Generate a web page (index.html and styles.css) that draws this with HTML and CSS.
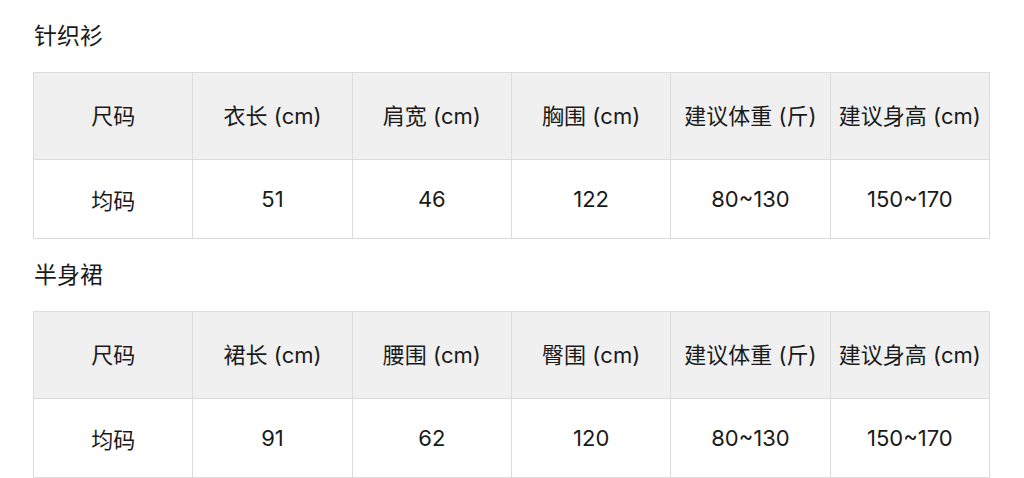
FILE: index.html
```html
<!DOCTYPE html>
<html lang="zh-CN">
<head>
<meta charset="utf-8">
<title>尺码表</title>
<link rel="stylesheet" href="styles.css">
</head>
<body>
<section class="block">
  <h2 class="title">针织衫</h2>
  <table class="size-table">
    <thead>
      <tr><th>尺码</th><th>衣长 (cm)</th><th>肩宽 (cm)</th><th>胸围 (cm)</th><th>建议体重 (斤)</th><th>建议身高 (cm)</th></tr>
    </thead>
    <tbody>
      <tr><td>均码</td><td>51</td><td>46</td><td>122</td><td>80~130</td><td>150~170</td></tr>
    </tbody>
  </table>
</section>
<section class="block">
  <h2 class="title">半身裙</h2>
  <table class="size-table">
    <thead>
      <tr><th>尺码</th><th>裙长 (cm)</th><th>腰围 (cm)</th><th>臀围 (cm)</th><th>建议体重 (斤)</th><th>建议身高 (cm)</th></tr>
    </thead>
    <tbody>
      <tr><td>均码</td><td>91</td><td>62</td><td>120</td><td>80~130</td><td>150~170</td></tr>
    </tbody>
  </table>
</section>
</body>
</html>
```
FILE: styles.css
```css
html, body {
  margin: 0;
  padding: 0;
  background: #ffffff;
}
body {
  padding: 22px 0 0 33px;
  font-family: "Inter", "Noto Sans CJK SC", sans-serif;
  color: #1a1a1a;
}
.block + .block {
  margin-top: 22px;
}
.title {
  margin: 0 0 22px 1px;
  font-size: 23px;
  line-height: 28px;
  font-weight: normal;
}
.size-table {
  width: 957px;
  border-collapse: collapse;
  table-layout: fixed;
}
.size-table th,
.size-table td {
  border: 1px solid #dcdcdc;
  text-align: center;
  vertical-align: middle;
  font-size: 22px;
  font-weight: normal;
  padding: 0;
}
.size-table th {
  background: #f0f0f0;
  height: 82px;
  padding-bottom: 4px;
}
.size-table td {
  height: 78px;
}
```
